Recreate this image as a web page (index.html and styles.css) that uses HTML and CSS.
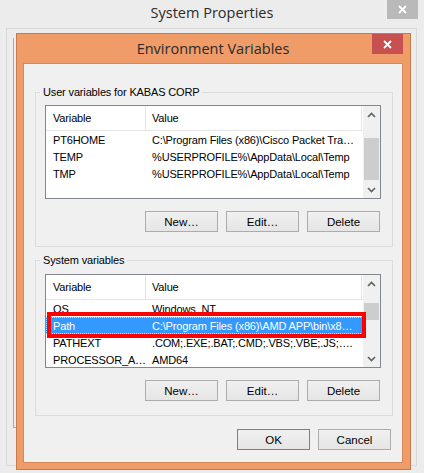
FILE: index.html
```html
<!DOCTYPE html>
<html>
<head>
<meta charset="utf-8">
<link rel="stylesheet" href="styles.css">
</head>
<body>
<div class="sp">
  <div class="sp-title">System Properties
    <span class="sp-close"><svg width="9" height="9" viewBox="0 0 9 9"><path d="M1 1L8 8M8 1L1 8" stroke="#fff" stroke-width="1.8"/></svg></span>
  </div>
  <div class="sp-frame"><div class="sp-tab"></div></div>
</div>

<div class="ev">
  <div class="ev-title">Environment Variables
    <span class="ev-close"><svg width="9" height="9" viewBox="0 0 9 9"><path d="M1 1L8 8M8 1L1 8" stroke="#fff" stroke-width="1.8"/></svg></span>
  </div>
  <div class="ev-body">
    <div class="grp grp1">
      <span class="grp-label">User variables for KABAS CORP</span>
      <div class="lv lv1">
        <div class="lv-main">
          <div class="lv-head"><div class="c1">Variable</div><div class="c2">Value</div></div>
          <div class="lv-row"><div class="c1">PT6HOME</div><div class="c2">C:\Program Files (x86)\Cisco Packet Tra…</div></div>
          <div class="lv-row"><div class="c1">TEMP</div><div class="c2">%USERPROFILE%\AppData\Local\Temp</div></div>
          <div class="lv-row"><div class="c1">TMP</div><div class="c2">%USERPROFILE%\AppData\Local\Temp</div></div>
        </div>
        <div class="sb">
          <div class="sb-btn"><svg width="9" height="6" viewBox="0 0 9 6"><polyline points="1,5 4.5,1.5 8,5" fill="none" stroke="#606060" stroke-width="1.6"/></svg></div>
          <div class="sb-track"><div class="thumb thumb1"></div></div>
          <div class="sb-btn"><svg width="9" height="6" viewBox="0 0 9 6"><polyline points="1,1 4.5,4.5 8,1" fill="none" stroke="#606060" stroke-width="1.6"/></svg></div>
        </div>
      </div>
      <div class="btns"><button class="btn">New…</button><button class="btn">Edit…</button><button class="btn">Delete</button></div>
    </div>

    <div class="grp grp2">
      <span class="grp-label">System variables</span>
      <div class="lv lv2">
        <div class="lv-main">
          <div class="lv-head"><div class="c1">Variable</div><div class="c2">Value</div></div>
          <div class="lv-row"><div class="c1">OS</div><div class="c2">Windows_NT</div></div>
          <div class="lv-row sel"><div class="c1">Path</div><div class="c2">C:\Program Files (x86)\AMD APP\bin\x8…</div></div>
          <div class="lv-row"><div class="c1">PATHEXT</div><div class="c2">.COM;.EXE;.BAT;.CMD;.VBS;.VBE;.JS;….</div></div>
          <div class="lv-row"><div class="c1">PROCESSOR_A…</div><div class="c2">AMD64</div></div>
        </div>
        <div class="sb">
          <div class="sb-btn"><svg width="9" height="6" viewBox="0 0 9 6"><polyline points="1,5 4.5,1.5 8,5" fill="none" stroke="#606060" stroke-width="1.6"/></svg></div>
          <div class="sb-track"><div class="thumb thumb2"></div></div>
          <div class="sb-btn"><svg width="9" height="6" viewBox="0 0 9 6"><polyline points="1,1 4.5,4.5 8,1" fill="none" stroke="#606060" stroke-width="1.6"/></svg></div>
        </div>
        <div class="hl"></div>
      </div>
      <div class="btns"><button class="btn">New…</button><button class="btn">Edit…</button><button class="btn">Delete</button></div>
    </div>

    <div class="dlg-btns"><button class="btn ok">OK</button><button class="btn">Cancel</button></div>
  </div>
</div>
</body>
</html>
```

FILE: styles.css
```css
* { box-sizing: border-box; }
html, body { margin: 0; padding: 0; }
body {
  width: 424px;
  height: 473px;
  background: #ececec;
  position: relative;
  overflow: hidden;
  font-family: "Liberation Sans", Arial, sans-serif;
  font-size: 11px;
  letter-spacing: -0.15px;
  color: #000;
}

.sp-title {
  height: 28px;
  position: relative;
  text-align: center;
  font-family: "Open Sans", sans-serif;
  font-size: 14.5px;
  letter-spacing: 0;
  line-height: 26px;
  color: #2b2b2b;
}
.sp-close {
  position: absolute;
  right: 6px;
  top: 0;
  width: 31px;
  height: 19px;
  background: #b9b9b9;
  display: flex;
  align-items: center;
  justify-content: center;
}
.sp-frame {
  margin-left: 6px;
  width: 411px;
  height: 438px;
  border: 1px solid #d9d9d9;
}
.sp-tab {
  margin: 9px 0 0 6px;
  width: 4px;
  height: 390px;
  border-left: 1px solid #a9a9a9;
  border-bottom: 1px solid #a9a9a9;
}

.ev {
  position: absolute;
  left: 16px;
  top: 33px;
  width: 395px;
  height: 437px;
  background: #ef9c69;
  border: 1px solid #c77b4d;
  padding: 0 7px 6px 6px;
  display: flex;
  flex-direction: column;
}
.ev-title {
  height: 29px;
  flex: none;
  position: relative;
  text-align: center;
  font-family: "Open Sans", sans-serif;
  font-size: 14.5px;
  letter-spacing: 0;
  line-height: 29px;
  color: #2b2b2b;
}
.ev-close {
  position: absolute;
  right: 0;
  top: 0;
  width: 31px;
  height: 20px;
  background: #c75050;
  display: flex;
  align-items: center;
  justify-content: center;
}
.ev-body {
  flex: 1;
  background: #f0f0f0;
  border: 1px solid #d28a5d;
  padding: 0 9px 0 11px;
}

.grp {
  border: 1px solid #dcdcdc;
  padding: 0 11px 14px 9px;
}
.grp1 { margin-top: 28px; }
.grp2 { margin-top: 13px; }
.grp-label {
  display: block;
  width: max-content;
  height: 14px;
  line-height: 14px;
  margin: -8px 0 0 -5px;
  padding: 0 3px;
  background: #f0f0f0;
}

.lv {
  position: relative;
  height: 94px;
  border: 1px solid #828790;
  background: #fff;
  display: flex;
}
.lv1 { margin-top: 6px; }
.lv2 { margin-top: 7px; }
.lv-main {
  flex: 1;
  display: flex;
  flex-direction: column;
  overflow: hidden;
}
.lv-head {
  flex: none;
  height: 25px;
  line-height: 24px;
  display: flex;
  border-bottom: 1px solid #e5e5e5;
}
.lv-head .c1 { border-right: 1px solid #e5e5e5; }
.lv-head .c2 { border-right: 1px solid #e5e5e5; margin-right: 1px; }
.lv-row {
  flex: none;
  height: 17px;
  line-height: 18px;
  display: flex;
}
.c1 {
  width: 100px;
  flex: none;
  padding-left: 7px;
  white-space: nowrap;
  overflow: hidden;
}
.c2 {
  flex: 1;
  padding-left: 6px;
  white-space: nowrap;
  overflow: hidden;
}
.sel {
  background: #3399ff;
  color: #fff;
  outline: 1px dotted rgba(255,255,255,0.7);
  outline-offset: -1px;
}

.sb {
  width: 17px;
  flex: none;
  background: #f0f0f0;
  display: flex;
  flex-direction: column;
}
.sb-btn {
  height: 17px;
  flex: none;
  display: flex;
  align-items: center;
  justify-content: center;
}
.sb-track { flex: 1; }
.thumb {
  margin-left: 1px;
  width: 15px;
  background: #cdcdcd;
}
.thumb1 { margin-top: 15px; height: 42px; }
.thumb2 { margin-top: 11px; height: 17px; }

.hl {
  position: absolute;
  left: 1px;
  top: 37px;
  width: 319px;
  height: 26px;
  border: 4px solid #ff0000;
}

.btns {
  display: flex;
  justify-content: flex-end;
  gap: 8px;
  margin-top: 12px;
  padding-right: 1px;
}
.btn {
  width: 73px;
  height: 21px;
  padding: 0;
  margin: 0;
  border: 1px solid #acacac;
  background: linear-gradient(#f0f0f0, #e5e5e5);
  font-family: "Liberation Sans", Arial, sans-serif;
  font-size: 11.5px;
  letter-spacing: 0;
  color: #000;
}
.btn.ok { border-color: #3c8fe0; }
.dlg-btns {
  margin-top: 13px;
  display: flex;
  justify-content: flex-end;
  gap: 8px;
  padding-right: 2px;
}
```
